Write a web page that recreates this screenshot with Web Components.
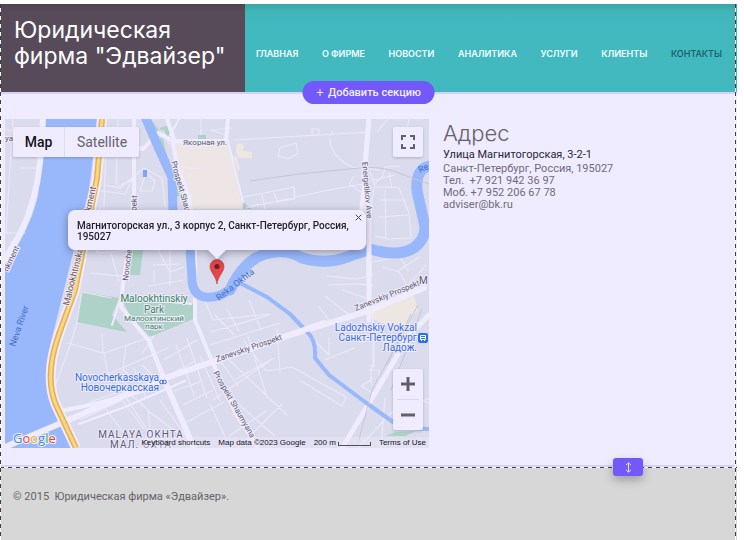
<!DOCTYPE html>
<html lang="ru">
<head>
<meta charset="utf-8">
<meta name="viewport" content="width=device-width, initial-scale=1">
<title>Юридическая фирма "Эдвайзер"</title>
<style>
:root{--accent:#7358fb;--lilac:#f0ecff;--line:#d8d0fc;--ink:#696578;--dash:#443c50}
html{height:100%}
body{margin:0;min-height:100%;display:flex;background:#fff;font-family:"Open Sans","Noto Sans",sans-serif;font-size:11px;color:var(--ink)}
</style>
</head>
<body>
<editor-page></editor-page>

<template id="t-page">
<style>
:host{flex:1;display:flex;flex-direction:column;box-sizing:border-box;margin-right:7px;padding-top:4px;position:relative;min-width:0}
.frame{position:absolute;inset:4px 0 0;pointer-events:none;
background:repeating-linear-gradient(#443c40 0 4px,#fff 4px 8px) left/1px 100% no-repeat,repeating-linear-gradient(#443c40 0 4px,#fff 4px 8px) calc(100% - 1px) 0/1px 100% no-repeat}
main{position:relative;border-top:2px solid var(--line);border-bottom:2px solid var(--line);background:var(--lilac);display:grid;grid-template-columns:424fr 294fr;gap:14px;padding:25px 0 17px 5px;align-items:start}
add-section{position:absolute;left:50%;top:-13px;transform:translateX(-50%)}
resize-handle{position:absolute;right:94px;bottom:-11px}
</style>
<site-header></site-header>
<main>
<city-map></city-map>
<contact-card>
<span slot="title">Адрес</span>
<span slot="street">Улица Магнитогорская, 3-2-1</span>
</contact-card>
<add-section>Добавить секцию</add-section>
<resize-handle></resize-handle>
</main>
<site-footer>© 2015 &nbsp;Юридическая фирма «Эдвайзер».</site-footer>
<div class="frame"></div>
</template>

<template id="t-header">
<style>
:host{display:grid;grid-template-columns:245px 1fr;min-height:88px;background:linear-gradient(#3ba4a6,#40b6b9 8px,#41b9bf 22px)}
.brand{background:linear-gradient(#4e4450,#574b59 8px);padding:13px 14px 0}
h1{margin:0;font:400 23px/26px Inter,"Noto Sans",sans-serif;color:#fff;white-space:nowrap}
nav{display:flex;justify-content:space-between;align-items:center;padding:12px 15px 0 11px}
</style>
<div class="brand"><h1>Юридическая<br>фирма "Эдвайзер"</h1></div>
<nav>
<nav-link>ГЛАВНАЯ</nav-link><nav-link>О ФИРМЕ</nav-link><nav-link>НОВОСТИ</nav-link><nav-link>АНАЛИТИКА</nav-link><nav-link>УСЛУГИ</nav-link><nav-link>КЛИЕНТЫ</nav-link><nav-link active>КОНТАКТЫ</nav-link>
</nav>
</template>

<template id="t-link">
<style>
:host{display:flex}
a{font:600 9px/12px Inter,sans-serif;color:#f4fcff;text-decoration:none;white-space:nowrap}
:host([active]) a{color:#1d5962;font-weight:500}
</style>
<a href="#"><slot></slot></a>
</template>

<template id="t-add">
<style>
:host{display:block;z-index:2}
button{display:flex;align-items:center;justify-content:center;gap:5px;height:23px;padding:0 14px;border:0;border-radius:12px;background:var(--accent);color:#f4f0ff;font:500 11px/16px Roboto,sans-serif;white-space:nowrap}
</style>
<button type="button"><svg width="7" height="7" viewBox="0 0 7 7" stroke="#f0ecff"><path d="M3.5 0v7M0 3.5h7"/></svg><span><slot></slot></span></button>
</template>

<template id="t-handle">
<style>
:host{display:block;z-index:2}
button{display:grid;place-items:center;width:30px;height:18px;padding:0;border:0;border-radius:3px;background:var(--accent);box-shadow:0 4px 10px #0004}
</style>
<button type="button" aria-label="Изменить высоту"><svg width="7" height="11" viewBox="0 0 7 11" fill="none" stroke="#e9e3ff"><path d="M3.5 1v9M1 3.2 3.5.8 6 3.2M1 7.8 3.5 10.2 6 7.8"/></svg></button>
</template>

<template id="t-contact">
<style>
:host{display:block;min-width:0}
h2{margin:0 0 2px;font:300 22px/28px Inter,"Noto Sans",sans-serif;color:#656070}
p{margin:0;font:400 11px/12px Roboto,"Noto Sans",sans-serif;color:#6f6a7c}
.street{color:#292536;margin-bottom:2px}
a{color:inherit;text-decoration:none}
</style>
<h2><slot name="title"></slot></h2>
<p class="street"><slot name="street"></slot></p>
<p>Санкт-Петербург, Россия, 195027</p>
<p>Тел. &nbsp;+7 921 942 36 97</p>
<p>Моб. +7 952 206 67 78</p>
<p><a href="mailto:adviser@bk.ru">adviser@bk.ru</a></p>
</template>

<template id="t-footer">
<style>
:host{display:block;flex:1;min-height:73px;box-sizing:border-box;padding:23px 13px;background:repeating-linear-gradient(90deg,#443c50 0 4px,#fff 4px 8px) top/100% 1px no-repeat #d7d7d7;color:#66636a;font:400 11px/14px Roboto,"Noto Sans",sans-serif}
</style>
<slot></slot>
</template>

<template id="t-info">
<style>
:host{display:block;filter:drop-shadow(0 2px 4px #0005)}
.box{position:relative;box-sizing:border-box;width:298px;padding:10px 9px 8px;border-radius:7px;background:var(--lilac);color:#24202e;font:500 10px/11px Roboto,sans-serif}
.box::after{content:"";position:absolute;left:50%;top:100%;margin-left:-9px;border:9px solid transparent;border-top-color:var(--lilac);border-bottom:0}
button{position:absolute;right:4px;top:4px;width:7px;height:7px;padding:0;border:0;background:none;display:grid}
</style>
<div class="box"><slot></slot><button type="button" aria-label="Close"><svg width="7" height="7" viewBox="0 0 7 7" stroke="#494553"><path d="M.7.7l5.6 5.6M6.3.7.7 6.3"/></svg></button></div>
</template>

<template id="t-map">
<style>
:host{display:block;position:relative;height:329px;overflow:hidden;background:#dadbed;font-family:Roboto,sans-serif}
.canvas{display:block;width:100%;height:100%}
.ctl{position:absolute;background:var(--lilac);border-radius:2px;box-shadow:0 1px 3px #0003;display:flex}
.ctl button{border:0;padding:0;background:none;font:400 14px/30px Roboto,sans-serif;color:#65616f;display:grid;place-items:center}
.type{left:8px;top:8px;height:30px}
.ctl.type button{width:74px}
.ctl.type .on{width:52px;color:#17131d;font-weight:500;border-right:1px solid #dfdaec}
.full{right:6px;top:8px;width:30px;height:30px}
.full button{width:30px}
.zoom{right:6px;bottom:18px;width:30px;flex-direction:column}
.zoom button{height:30px}
.zoom i{height:1px;background:#dcd8e6;margin:0 4px}
map-info{position:absolute;left:50%;top:91px;transform:translateX(-50%)}
.pin{position:absolute;left:50%;top:140px;margin-left:-8px}
.legal{position:absolute;right:0;bottom:0;height:11px;display:flex;align-items:center;gap:8px;padding:0 3px 0 2px;font:400 8px/11px "Liberation Sans",sans-serif;color:#16131d;background:#eeeafa66}
.legal button,.legal a{font:inherit;color:inherit;background:none;border:0;padding:0;text-decoration:none;white-space:nowrap}
.legal>*{white-space:nowrap}
.scale{display:flex;align-items:end;gap:2px}
.scale i{width:31px;height:3px;margin-bottom:2px;border:1px solid #514d59;border-top:0}
.logo{position:absolute;left:8px;bottom:1px;font:500 13px/17px "Open Sans",sans-serif;-webkit-text-stroke:2px #f4f1ff;paint-order:stroke fill}
.b{color:#4285f4}.r{color:#e94235}.y{color:#f5b400}.g{color:#34a853}
</style>
<svg class="canvas" viewBox="5 119 424 329" preserveAspectRatio="xMidYMid slice" role="img" aria-label="Карта">
<defs><style>
.w{fill:none;stroke:#f0ecff;stroke-linecap:round;stroke-linejoin:round}
.s{stroke-width:1.1;opacity:.8}
.t{font-family:Roboto,sans-serif;paint-order:stroke;stroke:#f0ecff;stroke-width:2px;stroke-linejoin:round}
.rd{font-size:8px;fill:#5c5967}.rv{fill:none;stroke:#99b7fb;stroke-linecap:round;stroke-linejoin:round}
.gr{fill:#388659}.bl{fill:#346ddd;font-size:10px}
</style></defs>
<path fill="#dadbed" d="M5 119h424v329H5z"/>
<path fill="#eee6e6" d="M174 143 229 144 233 165 243 209 190 209 177 180Z"/>
<path fill="#eee6e2" d="m237 143 7 2-1 6 9 1v6l-13 0-3-6zM233 156l3 0 4 12-2 4zM371 312l42-21 5 20-7 6-3 17-22-10-14-5z"/>
<path fill="#aed2c8" d="m82 292 37 6-7 17 15 17-16-3-34-7zM121 297l72 7 0 15-43 18-20-21zM142 119h9l11 16 6 25 6 12-3 2-11-24zM159 128l8-2 5 10-3 2zM132 250h11l-3 25-11 0zM198 135h8v5h-8zM174 175l6 20-4 3zM243 202l9 7h-9zM395 432l21-1-10 5-20 0z"/>
<path fill="#99b7fb" d="M46 119H97L93 157 89 190Q80 225 70 265L50 346Q45 376 54 403L74 448H5V267Q32 225 38 195Z"/>
<g class="w s">
<path d="M13 119 6 233M6 129l27 10M20 168h20M5 233h20M97 195l6-33 2-43M95 190l30 4 7-15M108 135l24 7 1 38-15 6M105 185l15 3 24-20 18 10 3 28M118 119l-2 66M106 145l-3 90M140 191l6-18 9 8-3 10zM100 206l-3 47 35-3M84 252l-8 42M86 258l-9 29M91 273l38 4M82 292l29 6M111 253l8 28M158 250l12 22 14-5M153 265l27-1M148 286l36-6M154 270v12M170 250v35"/>
<path d="m68 343 35 10-1-20M104 353l50-17-12 18M54 389l17-46 6-21 5-30M104 353l4 21 40 36 4 38M108 374l60-26M119 373l14 21 18-5M134 368l12 30M90 402l43-15M80 420l42-20 22 29M103 405l31 42M123 393l36 55M142 365l24 22M126 345l-3 25 16 12M164 360l33-20M170 375l25-14M174 391l26-9M183 405l30-15M187 422l37-20M176 345l18 50M187 338l20 60M200 356l20 45M160 400l34 48M148 411l34 25M210 404l20 44M220 388l55 48M229 360l58 55M236 379l38-21M213 400l58-40M229 436l37-25M238 448l44-44M238 386l-16-23-25 1M244 341l22 30 26-4 54 30-4 9-41-25M204 299l9 21 57-6M215 315l19 20M227 309l12 22M249 300l12 30M211 332l58-17M210 345l70-22M248 337l19 60M277 328l3 45"/>
<path d="m156 138 15-2M163 130l6 14 10-2M174 166l26 3M201 119v15M211 130l20-2M244 197l50-10 1 12-48 7M246 208l83-18 40-7M262 195l3 14M274 193l4 9M294 188v10M361 192l-12-8 5-8M374 184l9-8 2-9 15-1M388 119l-11 13M409 119l-3 16M234 140l136-8M210 130l18 5M280 148l16-5 2 10-10 6-10-3zM312 129h7v6h-7zM330 136l3-5M330 139q0 17 22 28l27 3M370 172l5 15 17 0-3-14M374 180l20-5M374 188l-6 43M385 190l1 49 25-1-2-25-10-25-15-1M380 200h26M378 217l30-2M375 236l11 2M365 188l-1 46M373 262l27-5 8 14M373 275l-16 4-30-3M373 285l-20-1-25 1M343 290l29 10M325 296l23 18M319 307l14 18M383 267l16 5 9 15M398 271l21-14M404 290l22-25M373 311v54l-2 6M369 366l5 0v-37M369 370h10v15h-8v-15M354 348l-29 12M304 330l25 25 0-17M377 396l-16-10 12-7M385 398l-4 50M417 399l12 4M429 399l-32 8-39 41"/>
</g>
<g class="w">
<path stroke-width="6" d="M43 119 40 163Q36 202 20 234L5 259"/>
<path stroke-width="4" d="M134 119v75l-5 52-6 37-2 24 28 34 17 45 27 62M228 119l-2 22-53 0-15-8-15 16-9-2M175 142l-8-23M173 144l5 26 11 26 6 48 0 76 14 34 27 60 22 34"/>
<path stroke-width="2" d="M228 141l15 61M170 135l9-16M121 297l70 7M112 325l9-28M79 424l46-17 60-26"/>
<path stroke-width="6" d="M5 447 80 415 165 378 212 362 290 335 365 312 424 288"/>
<path stroke-width="4" d="M56 412 99 403 145 390M148 339l16 38 31 71M369 119l-5 67-7 62"/>
<path stroke-width="5" d="M369 119l-5 56 5 35 0 71 0 39M342 448 377 390 408 337 429 315"/>
</g>
<g class="rv"><path stroke-width="9" d="M146 119 159 149 172 177 173 212 190 248 192 278Q192 295 205 297T230 289"/>
<path stroke-width="11" d="M230 290Q244 260 265 254T302 258Q326 265 347 257L370 249Q400 258 415 247Q428 236 424 222L417 191Q415 167 432 166"/>
<path stroke-width="4" d="M242 284 267 297 290 314 308 333Q316 340 315 358L329 375 365 402 393 422Q405 429 429 429"/></g>
<g class="w"><path stroke-width="5" d="M369 241v34"/><path stroke-width="6" d="M284 337l40-14"/></g>
<path fill="none" stroke="#c7c6d6" d="M250 181l49-7 60-6q23-3 45 7l25 9M418 305l-46 85-14 53M422 309 391 390M411 314 387 365"/>
<g fill="none"><path stroke="#f2ebff" stroke-width="10" d="M102 119 97 178 87 229 75 290 59 334Q44 376 56 405L76 448"/>
<path stroke="#e9af4b" stroke-width="6" d="M102 119 97 178 87 229 75 290 59 334Q44 376 56 405L76 448"/>
<path stroke="#f4d787" stroke-width="3" d="M102 119 97 178 87 229 75 290 59 334Q44 376 56 405L76 448"/></g>
<path fill="#7ba7f8" d="M143 170h4v7h-4z"/>
<g class="t">
<g class="rd"><text x="183" y="145">Якорная ул.</text><text transform="translate(171 162)rotate(74)">Prospekt Shaumyana</text>
<text transform="translate(362 162)rotate(85)">Energetikov Ave</text><text transform="translate(136 215)rotate(-87)">spekt</text><text transform="translate(128 281)rotate(-83)">Novocherkasskiy</text>
<text transform="translate(8 272)rotate(-65)">nkment</text><text x="5" y="141">ya</text>
<text transform="translate(217 362)rotate(-19)">Zanevskiy Prospekt</text><text transform="translate(356 311)rotate(-22)">Zanevskiy Prospekt</text><text transform="translate(213 373)rotate(60)">Prospekt Shaumyana</text></g>
<g font-size="9" fill="#795541"><text transform="translate(69 306)rotate(-76)">Malookhtinskaya</text><text transform="translate(85 239)rotate(-78)">Embankment</text></g>
<g class="gr" text-anchor="middle"><text x="154" y="302" font-size="10">Malookhtinskiy</text><text x="154" y="313" font-size="10">Park</text><text x="154" y="321" font-size="8">Малоохтинский</text><text x="154" y="329" font-size="8">парк</text></g>
<g class="bl" text-anchor="end"><text x="159" y="381">Novocherkasskaya</text><text x="159" y="391">Новочеркасская</text><text x="417" y="331">Ladozhskiy Vokzal</text><text x="417" y="341">Санкт-Петербург</text><text x="417" y="351">Ладож.</text></g>
<g fill="#5c5b70" font-size="10" letter-spacing="1" text-anchor="middle"><text x="141" y="438">MALAYA OKHTA</text><text x="141" y="448">МАЛ. ОХТА</text></g><text x="419" y="284" font-size="10" fill="#5c5b70">M</text>
</g>
<g font-family="Roboto,sans-serif" font-size="9" fill="#3d6fcc"><text transform="translate(15 347)rotate(-71)">Neva River</text><text transform="translate(219 301)rotate(-38)">Reka Okhta</text><text transform="translate(420 173)rotate(-25)">Re</text></g>
<g fill="none" stroke="#3770e5"><circle cx="161.500" cy="382" r="1.800"/><circle cx="164.500" cy="382" r="1.800"/></g>
<rect x="418" y="333" width="10" height="10" rx="2" fill="#2970ef"/><path fill="none" stroke="#fff" d="M420.500 335.500h5v4h-5zM420.500 337.500h5M421 341l1-1M425 341l-1-1"/>
</svg>
<svg class="pin" width="16" height="26" viewBox="0 0 16 26"><path fill="#e44649" stroke="#b9383d" stroke-width=".6" d="M8 25C7.500 18 1 13 1 7.500A7 7 0 0 1 15 7.500C15 13 8.500 18 8 25Z"/><circle cx="8" cy="7.500" r="2.600" fill="#761c2a"/></svg>
<map-info>Магнитогорская ул., 3 корпус 2, Санкт-Петербург, Россия, 195027</map-info>
<div class="ctl type"><button type="button" class="on">Map</button><button type="button">Satellite</button></div>
<div class="ctl full"><button type="button" aria-label="Fullscreen"><svg width="14" height="14" viewBox="0 0 14 14" fill="none" stroke="#65606e" stroke-width="2"><path d="M1 5V1h4M9 1h4v4M13 9v4H9M5 13H1V9"/></svg></button></div>
<div class="ctl zoom"><button type="button" aria-label="Zoom in"><svg width="14" height="14" viewBox="0 0 14 14" stroke="#65606e" stroke-width="3"><path d="M7 0v14M0 7h14"/></svg></button><i></i><button type="button" aria-label="Zoom out"><svg width="14" height="14" viewBox="0 0 14 14" stroke="#65606e" stroke-width="3"><path d="M0 7h14"/></svg></button></div>
<div class="logo" aria-label="Google"><span class="b">G</span><span class="r">o</span><span class="y">o</span><span class="b">g</span><span class="g">l</span><span class="r">e</span></div>
<div class="legal"><button type="button">Keyboard shortcuts</button><span>Map data ©2023 Google</span><span class="scale">200 m<i></i></span><a href="#">Terms of Use</a></div>
</template>

<script>
const define = (name, templateId) => customElements.define(name, class extends HTMLElement {
  constructor() {
    super();
    this.attachShadow({ mode: "open" }).append(document.getElementById(templateId).content.cloneNode(true));
  }
});
define("nav-link", "t-link");
define("site-header", "t-header");
define("add-section", "t-add");
define("resize-handle", "t-handle");
define("contact-card", "t-contact");
define("site-footer", "t-footer");
define("map-info", "t-info");
define("city-map", "t-map");
define("editor-page", "t-page");
</script>
</body>
</html>
